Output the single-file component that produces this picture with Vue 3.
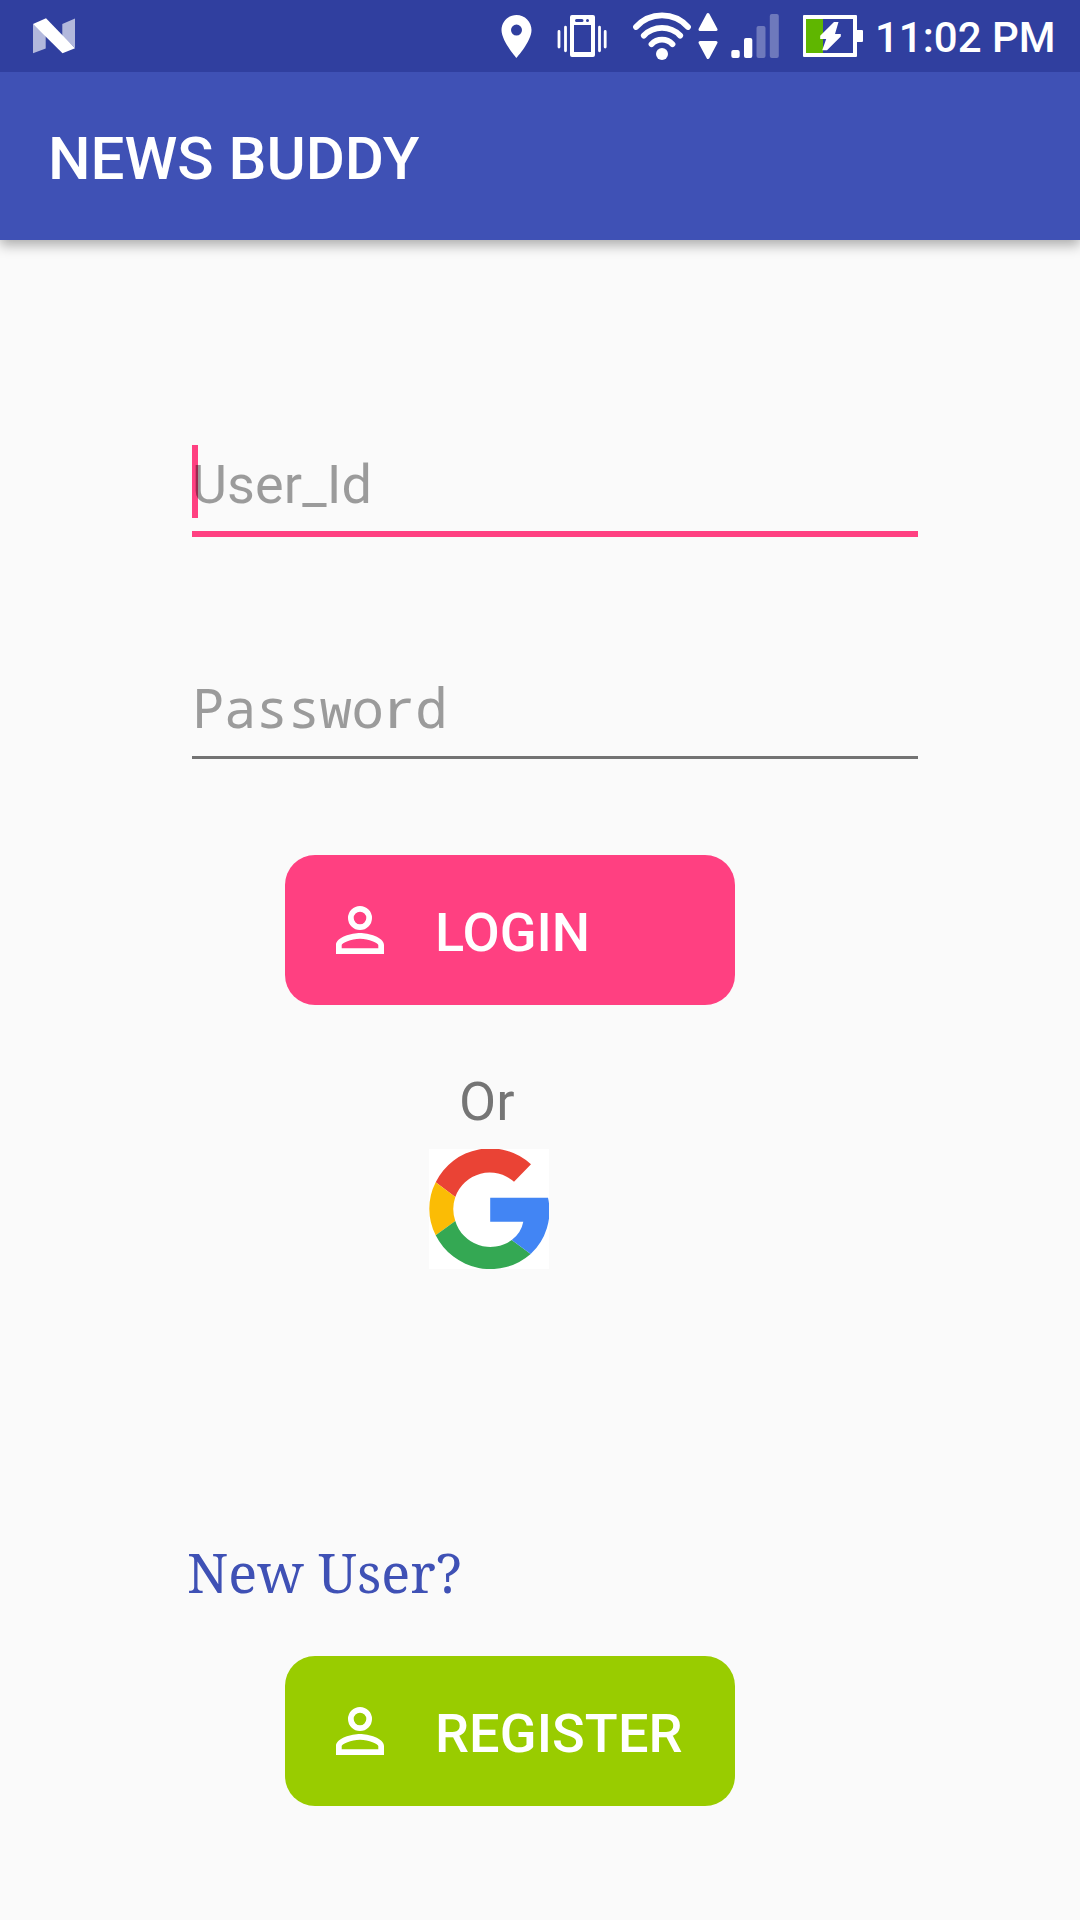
<script setup>
const title = 'NEWS BUDDY'
const time = '11:02 PM'
</script>

<template>
  <div class="screen">
    <header class="status">
      <svg class="ico n" width="42" height="72" viewBox="33 0 42 72">
        <path d="M33 24v29.3l12.7-4.8V35zM62.3 24 75 18.5V48L62.3 36z" fill="#fff" fill-opacity=".63" />
        <path d="M33 24 46 18.3 75 48.3 62.5 53.3z" fill="#fff" />
      </svg>
      <svg class="ico pin" width="31" height="72" viewBox="501 0 31 72">
        <path fill="#fff" fill-rule="evenodd" d="M516.5 15c-8.4 0-15 6.700-15 15.100C501.500 41.300 516.500 58 516.500 58s15-16.700 15-27.900C531.500 21.700 524.900 15 516.500 15zm0 20.600a5.500 5.500 0 1 1 0-11 5.500 5.500 0 0 1 0 11z" />
      </svg>
      <svg class="ico vib" width="50" height="72" viewBox="557 0 50 72">
        <path fill="#fff" fill-rule="evenodd" d="M572 15h21a2 2 0 0 1 2 2v38a2 2 0 0 1-2 2h-21a2 2 0 0 1-2-2V17a2 2 0 0 1 2-2zM574 25v27h17V25zM576.500 19a1.500 1.500 0 0 0 0 3h5.500a1.500 1.500 0 0 0 0-3zM587.500 19a1.500 1.500 0 0 0 0 3 1.500 1.500 0 0 0 0-3z" />
        <path d="M565.500 27.200v23.600M599.500 27.200v23.600M559 31.500v15.500M605.200 31.500v15.500" stroke="#fff" stroke-width="2.800" stroke-linecap="round" />
      </svg>
      <svg class="ico wifi" width="60" height="72" viewBox="632 0 60 72">
        <g fill="none" stroke="#fff" stroke-width="5.800" stroke-linecap="round">
          <path d="M636 27A35 35 0 0 1 688 27" />
          <path d="M643.800 35.600A25.500 25.500 0 0 1 680.200 35.600" />
          <path d="M651.500 44.200A14.500 14.500 0 0 1 672.500 44.200" />
        </g>
        <circle cx="662" cy="54" r="6" fill="#fff" />
      </svg>
      <svg class="ico arrows" width="20" height="72" viewBox="698.500 0 20 72">
        <path d="M708.500 14.500 716.500 29.500H700.500zM708.500 57.500 716.500 42.500H700.500z" fill="#fff" stroke="#fff" stroke-width="3" stroke-linejoin="round" />
      </svg>
      <svg class="ico signal" width="48" height="72" viewBox="731 0 48 72">
        <g fill="#fff">
          <rect x="731.300" y="50" width="8.400" height="8" rx="2" />
          <rect x="744" y="38" width="8.300" height="20" rx="2" />
          <rect x="756.500" y="26" width="9" height="32" rx="2" fill-opacity=".3" />
          <rect x="769.800" y="14" width="9" height="44" rx="2" fill-opacity=".3" />
        </g>
      </svg>
      <svg class="ico battery" width="60" height="72" viewBox="803 0 60 72">
        <path fill="#5fb600" d="M806 19h17v34h-17z" />
        <path fill="#fff" fill-rule="evenodd" d="M804 15h52a1 1 0 0 1 1 1v14h5a1 1 0 0 1 1 1v10a1 1 0 0 1-1 1h-5v14a1 1 0 0 1-1 1h-52a1 1 0 0 1-1-1V16a1 1 0 0 1 1-1zM806 19v34h47V19z" />
        <path fill="#fff" d="M834 22h4.500L835 34h5.800v2.400L827 50.300h-4.800l4-11.300h-6v-3.200z" />
      </svg>
      <span class="time">{{ time }}</span>
    </header>

    <div class="appbar"><h1>{{ title }}</h1></div>

    <main>
      <div class="field user">
        <span class="caret"></span>
        <span class="hint">User_Id</span>
      </div>
      <div class="field pass"><span class="hint mono">Passwo<span class="plain">r</span>d</span></div>

      <button class="btn login">
        <svg width="72" height="72" viewBox="0 0 24 24">
          <path fill="#fff" fill-rule="evenodd" d="M12 4a4 4 0 1 0 0 8 4 4 0 0 0 0-8zm0 1.900a2.100 2.100 0 1 1 0 4.200 2.100 2.100 0 0 1 0-4.200zM12 13c-2.670 0-8 1.340-8 4v3h16v-3c0-2.660-5.330-4-8-4zm0 1.900c2.970 0 6.100 1.460 6.100 2.100v1.100H5.900V17c0-.64 3.130-2.100 6.100-2.100z" />
        </svg>
        <span>LOGIN</span>
      </button>

      <div class="or">Or</div>

      <svg class="google" width="120" height="120" viewBox="0 0 120 120">
        <path fill="#fff" d="M0 0h120v120H0z" />
        <path fill="#ea4335" d="M6.700 33.300A60.500 60.500 0 0 1 102 15.300L85 32.700A36.500 36.500 0 0 0 26.300 48z" />
        <path fill="#fbbc05" d="M6.700 33.300 26.300 48A37 37 0 0 0 26.300 72L6.700 86.300A58 58 0 0 1 6.700 33.300z" />
        <path fill="#34a853" d="M6.700 86.300 26.300 72A36.500 36.500 0 0 0 82.700 91L101.700 105A61.200 61.200 0 0 1 6.700 86.300z" />
        <path fill="#4285f4" d="M61.200 48.800H119A59 59 0 0 1 101.700 105L82.700 91A29 29 0 0 0 94.300 72.800H61.200z" />
      </svg>

      <div class="new">New User?</div>

      <button class="btn register">
        <svg width="72" height="72" viewBox="0 0 24 24">
          <path fill="#fff" fill-rule="evenodd" d="M12 4a4 4 0 1 0 0 8 4 4 0 0 0 0-8zm0 1.900a2.100 2.100 0 1 1 0 4.200 2.100 2.100 0 0 1 0-4.200zM12 13c-2.670 0-8 1.340-8 4v3h16v-3c0-2.660-5.330-4-8-4zm0 1.900c2.970 0 6.100 1.460 6.100 2.100v1.100H5.900V17c0-.64 3.130-2.100 6.100-2.100z" />
        </svg>
        <span>REGISTER</span>
      </button>
    </main>
  </div>
</template>

<style>
body { background: #fafafa; }
</style>

<style scoped>
.screen {
  width: 1080px;
  height: 1920px;
  overflow: hidden;
  background: #fafafa;
  font-family: Roboto, sans-serif;
  display: flex;
  flex-direction: column;
}
svg { display: block; flex: none; }
.status {
  position: relative;
  z-index: 1;
  height: 72px;
  flex: none;
  display: flex;
  background: #303f9f;
}
.n { margin-left: 33px; }
.pin { margin-left: 426px; }
.vib { margin-left: 25px; }
.wifi { margin-left: 25px; }
.arrows { margin-left: 6px; }
.signal { margin-left: 13px; }
.battery { margin-left: 24px; }
.time {
  margin-left: 12px;
  font-size: 42px;
  font-weight: 500;
  line-height: 75px;
  color: #fff;
  white-space: nowrap;
}
.appbar {
  height: 168px;
  flex: none;
  background: #3f51b5;
  box-shadow: 0 5px 12px rgba(0, 0, 0, 0.32);
}
h1 {
  margin: 0;
  padding-left: 48px;
  font-size: 60px;
  font-weight: 500;
  line-height: 173px;
  color: #fff;
  white-space: nowrap;
}
main {
  display: flex;
  flex-direction: column;
  align-items: flex-start;
}
.field {
  position: relative;
  box-sizing: border-box;
  width: 726px;
  margin-left: 192px;
  font-size: 54px;
  color: #9b9b9b;
}
.hint { display: block; }
.user {
  height: 92px;
  margin-top: 205px;
  border-bottom: 6px solid #ff4081;
}
.user .hint {
  position: relative;
  line-height: 79px;
  letter-spacing: 0.1px;
  color: rgba(0, 0, 0, 0.38);
}
.caret {
  position: absolute;
  left: 0;
  top: 0;
  width: 6px;
  height: 73px;
  background: #ff4081;
}
.pass {
  height: 89px;
  margin-top: 133px;
  border-bottom: 3px solid #737373;
}
.mono {
  font-family: "Noto Sans Mono", "Droid Sans Mono", "DejaVu Sans Mono", monospace;
  line-height: 75px;
  letter-spacing: -0.5px;
}
.plain {
  display: inline-block;
  width: 31.9px;
  font-family: "Noto Sans", sans-serif;
  transform: translateX(1.7px) scaleX(1.22);
  transform-origin: left;
}
.btn {
  display: flex;
  align-items: center;
  box-sizing: border-box;
  width: 450px;
  height: 150px;
  margin: 0 0 0 285px;
  padding: 0 0 0 39px;
  border: 0;
  border-radius: 30px;
  color: #fff;
  font-family: inherit;
  font-size: 54px;
  font-weight: 500;
}
.btn span {
  margin-left: 39px;
  padding-top: 5px;
  white-space: nowrap;
}
.login { margin-top: 96px; background: #ff4081; }
.or {
  margin: 65px 0 0 459px;
  font-size: 54px;
  line-height: 64px;
  color: #757575;
}
.google { margin: 15px 0 0 429px; }
.new {
  margin: 266px 0 0 187px;
  font-family: "Noto Serif", "Droid Serif", "DejaVu Serif Condensed", "DejaVu Serif", serif;
  font-size: 54px;
  line-height: 74px;
  letter-spacing: 0.1px;
  color: #3f51b5;
}
.register { margin-top: 47px; background: #99cc00; }
.register span { letter-spacing: 0.12px; }
</style>
